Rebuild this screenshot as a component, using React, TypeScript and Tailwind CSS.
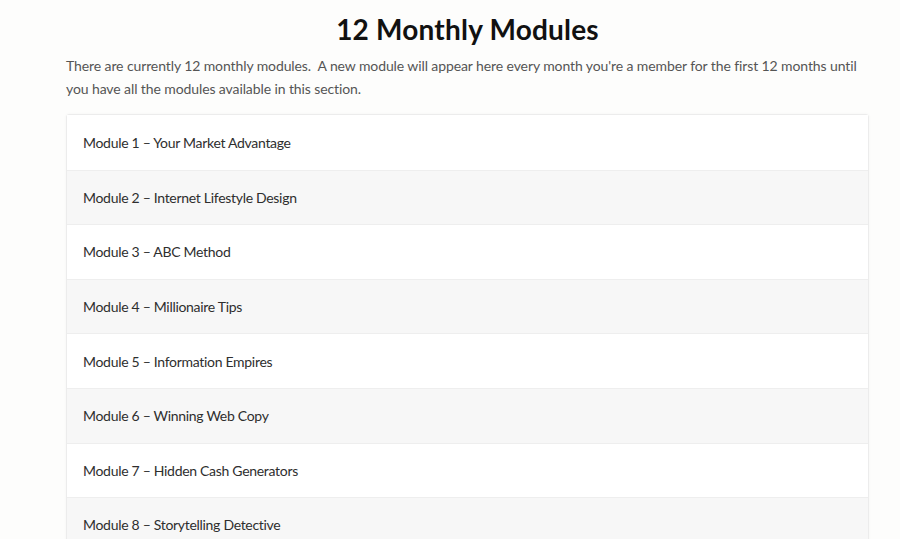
import React from 'react';

const modules = [
  'Module 1 – Your Market Advantage',
  'Module 2 – Internet Lifestyle Design',
  'Module 3 – ABC Method',
  'Module 4 – Millionaire Tips',
  'Module 5 – Information Empires',
  'Module 6 – Winning Web Copy',
  'Module 7 – Hidden Cash Generators',
  'Module 8 – Storytelling Detective',
  'Module 9 – Profit Multipliers',
];

const App: React.FC = () => {
  return (
    <div
      className="h-screen overflow-hidden bg-[#fdfdfc] pt-[12px]"
      style={{ fontFamily: 'Lato, "Liberation Sans", sans-serif' }}
    >
      <div className="w-[803px] ml-[66px]">
        <h1 className="text-center text-[28px] leading-[34px] font-bold text-[#111] tracking-[0.2px]">
          12 Monthly Modules
        </h1>
        <p className="mt-[8px] text-[14px] leading-[23px] text-[#555] tracking-[-0.1px]">
          There are currently 12 monthly modules.&nbsp; A new module will appear here every month you're a
          member for the first 12 months until you have all the modules available in this section.
        </p>
        <div className="mt-[14px] border border-[#ececec] rounded-[3px] shadow-[0_0_3px_rgba(0,0,0,0.04)]">
          {modules.map((m, i) => (
            <div
              key={i}
              className={`h-[54.6px] flex items-center px-[16px] text-[14px] text-[#2e2e2e] tracking-[-0.3px] ${
                i > 0 ? 'border-t border-[#eeeeee]' : ''
              } ${i % 2 === 1 ? 'bg-[#f7f7f7]' : 'bg-white'}`}
            >
              {m}
            </div>
          ))}
        </div>
      </div>
    </div>
  );
};

export default App;
